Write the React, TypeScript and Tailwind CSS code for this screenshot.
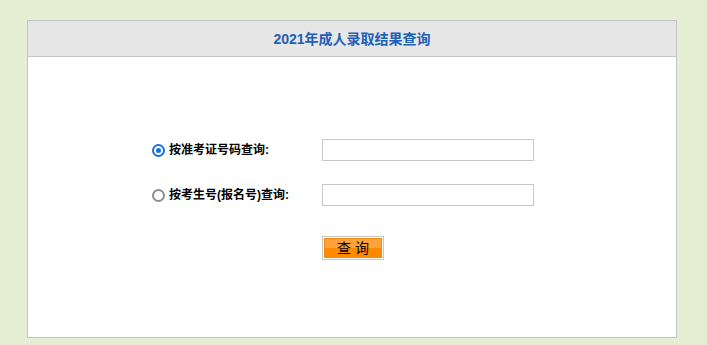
import { useState } from 'react';

const font = { fontFamily: '"Liberation Sans", "Noto Sans CJK SC", sans-serif' };

const Radio = ({ checked }: { checked: boolean }) => (
  <span
    className={`w-[13px] h-[13px] rounded-full border-2 flex items-center justify-center bg-white ${
      checked ? 'border-[#1a6fe0]' : 'border-[#8a8a95]'
    }`}
  >
    {checked && <span className="w-[5px] h-[5px] rounded-full bg-[#1a6fe0]"></span>}
  </span>
);

const App = () => {
  const [mode, setMode] = useState(0);

  return (
    <div className="min-h-screen w-full bg-[#e5edd3] pt-[20px] pl-[27px]" style={font}>
      <div className="w-[650px] border border-[#c4c4c4] bg-white">
        {/* Header */}
        <div className="h-[36px] bg-[#e6e6e6] border-b border-[#c4c4c4] flex items-center justify-center">
          <h1 className="text-[14px] font-bold text-[#1e5fb8] leading-none">2021年成人录取结果查询</h1>
        </div>

        {/* Form */}
        <div className="h-[280px] pt-[82px] pl-[124px]">
          <div className="flex items-center h-[22px]">
            <label className="w-[170px] flex items-center gap-[4px] cursor-pointer" onClick={() => setMode(0)}>
              <Radio checked={mode === 0} />
              <span className="text-[12px] font-bold text-black">按准考证号码查询:</span>
            </label>
            <input className="w-[212px] h-[22px] border border-[#c8c8c8] outline-none px-1 text-[12px]" />
          </div>

          <div className="flex items-center h-[22px] mt-[23px]">
            <label className="w-[170px] flex items-center gap-[4px] cursor-pointer" onClick={() => setMode(1)}>
              <Radio checked={mode === 1} />
              <span className="text-[12px] font-bold text-black">按考生号(报名号)查询:</span>
            </label>
            <input className="w-[212px] h-[22px] border border-[#c8c8c8] outline-none px-1 text-[12px]" />
          </div>

          <div className="flex mt-[30px] ml-[170px]">
            <button className="block w-[62px] h-[24px] border border-[#c8c8c8] p-[1px] bg-white">
              <span className="flex flex-col w-full h-full border border-[#f28a10] relative">
                <span className="h-1/2 bg-[#ffa23c]"></span>
                <span className="h-1/2 bg-[#ff8a00]"></span>
                <span className="absolute inset-0 flex items-center justify-center text-[14px] text-black leading-none">
                  查&nbsp;询
                </span>
              </span>
            </button>
          </div>
        </div>
      </div>
    </div>
  );
};

export default App;
